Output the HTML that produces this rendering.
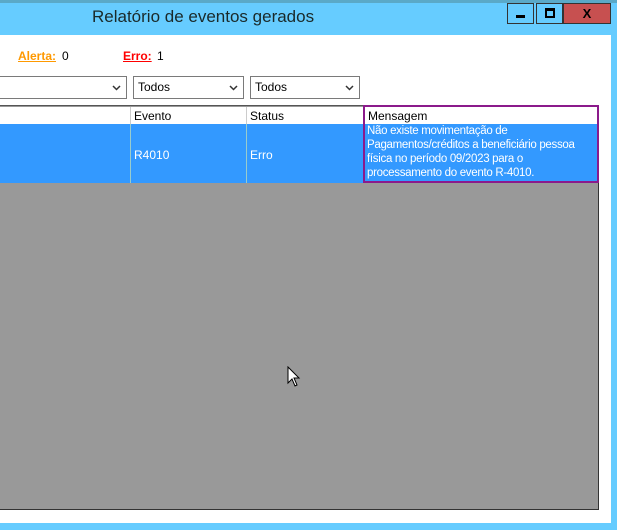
<!DOCTYPE html>
<html><head><style>
body{margin:0;width:617px;height:530px;position:relative;overflow:hidden;background:#66ccff;font-family:"Liberation Sans",sans-serif;}
.a{position:absolute}
.combo{position:absolute;top:76px;border:1px solid #7a7a7a;background:#fff;font-size:12px;line-height:21px;padding-left:4px;box-sizing:border-box;height:23px}
.combo svg{position:absolute;right:5px;top:8px}
.hdr{position:absolute;top:107px;height:17px;font-size:12px;line-height:19px;padding-left:3px;border-right:1px solid #ccc;background:#fff;box-sizing:border-box}
</style></head><body>
<div class="a" style="left:0;top:0;width:617px;height:3px;background:#5aa9c8"></div>
<div class="a" style="left:92px;top:7px;font-size:17px;color:#1a2a2a">Relatório de eventos gerados</div>
<div class="a" style="left:507px;top:3px;width:27px;height:21px;border:1px solid #333;box-sizing:border-box;background:#66ccff"><div class="a" style="left:8px;top:11px;width:9px;height:3px;background:#000"></div></div>
<div class="a" style="left:536px;top:3px;width:27px;height:21px;border:1px solid #333;box-sizing:border-box;background:#66ccff"><div class="a" style="left:8px;top:4px;width:10px;height:10px;border:2px solid #000;border-top-width:3px;box-sizing:border-box"></div></div>
<div class="a" style="left:563px;top:3px;width:48px;height:21px;background:#c75050;border:1px solid #333;box-sizing:border-box;color:#000;font-weight:bold;font-size:13px;text-align:center;line-height:19px">X</div>
<div class="a" style="left:0;top:35px;width:611px;height:488px;background:#fff"></div>
<div class="a" style="left:18px;top:49px;font-size:12px;font-weight:bold;color:#ff9900;text-decoration:underline">Alerta:</div>
<div class="a" style="left:62px;top:49px;font-size:12px">0</div>
<div class="a" style="left:123px;top:49px;font-size:12px;font-weight:bold;color:#ff0000;text-decoration:underline">Erro:</div>
<div class="a" style="left:157px;top:49px;font-size:12px">1</div>
<div class="combo" style="left:0;width:127px;border-left:none"><svg width="9" height="6"><path d="M1 1L4.5 4.5L8 1" stroke="#333" stroke-width="1.5" fill="none"/></svg></div>
<div class="combo" style="left:133px;width:111px">Todos<svg width="9" height="6"><path d="M1 1L4.5 4.5L8 1" stroke="#333" stroke-width="1.5" fill="none"/></svg></div>
<div class="combo" style="left:250px;width:110px">Todos<svg width="9" height="6"><path d="M1 1L4.5 4.5L8 1" stroke="#333" stroke-width="1.5" fill="none"/></svg></div>
<div class="a" style="left:0;top:105px;width:599px;height:405px;background:#999;border-right:1px solid #333;border-bottom:1px solid #333;border-top:1px solid #555;box-sizing:border-box"></div>
<div class="hdr" style="left:0;width:131px"></div>
<div class="hdr" style="left:131px;width:116px">Evento</div>
<div class="hdr" style="left:247px;width:117px">Status</div>
<div class="a" style="left:0;top:124px;width:364px;height:59px;background:#3399ff"></div>
<div class="a" style="left:130px;top:124px;width:1px;height:59px;background:#9cc"></div>
<div class="a" style="left:246px;top:124px;width:1px;height:59px;background:#9cc"></div>
<div class="a" style="left:134px;top:148px;font-size:12px;color:#fff">R4010</div>
<div class="a" style="left:250px;top:148px;font-size:12px;color:#fff">Erro</div>
<div class="a" style="left:363px;top:105px;width:236px;height:78px;border:2px solid #8b1a8b;box-sizing:border-box;background:#3399ff;overflow:hidden">
<div style="background:#fff;height:17px;font-size:12px;line-height:19px;padding-left:3px">Mensagem</div>
<div style="color:#fff;font-size:11.5px;line-height:14px;padding:0 0 0 2px;letter-spacing:-0.3px;white-space:nowrap">Não existe movimentação de<br>Pagamentos/créditos a beneficiário pessoa<br>física no período 09/2023 para o<br>processamento do evento R-4010.</div>
</div>
<svg class="a" style="left:287px;top:366px" width="14" height="22"><path d="M1 1L1 17L5 13L8 20L10 19L7 12L12 12Z" fill="#fff" stroke="#000" stroke-width="1"/></svg>
</body></html>
